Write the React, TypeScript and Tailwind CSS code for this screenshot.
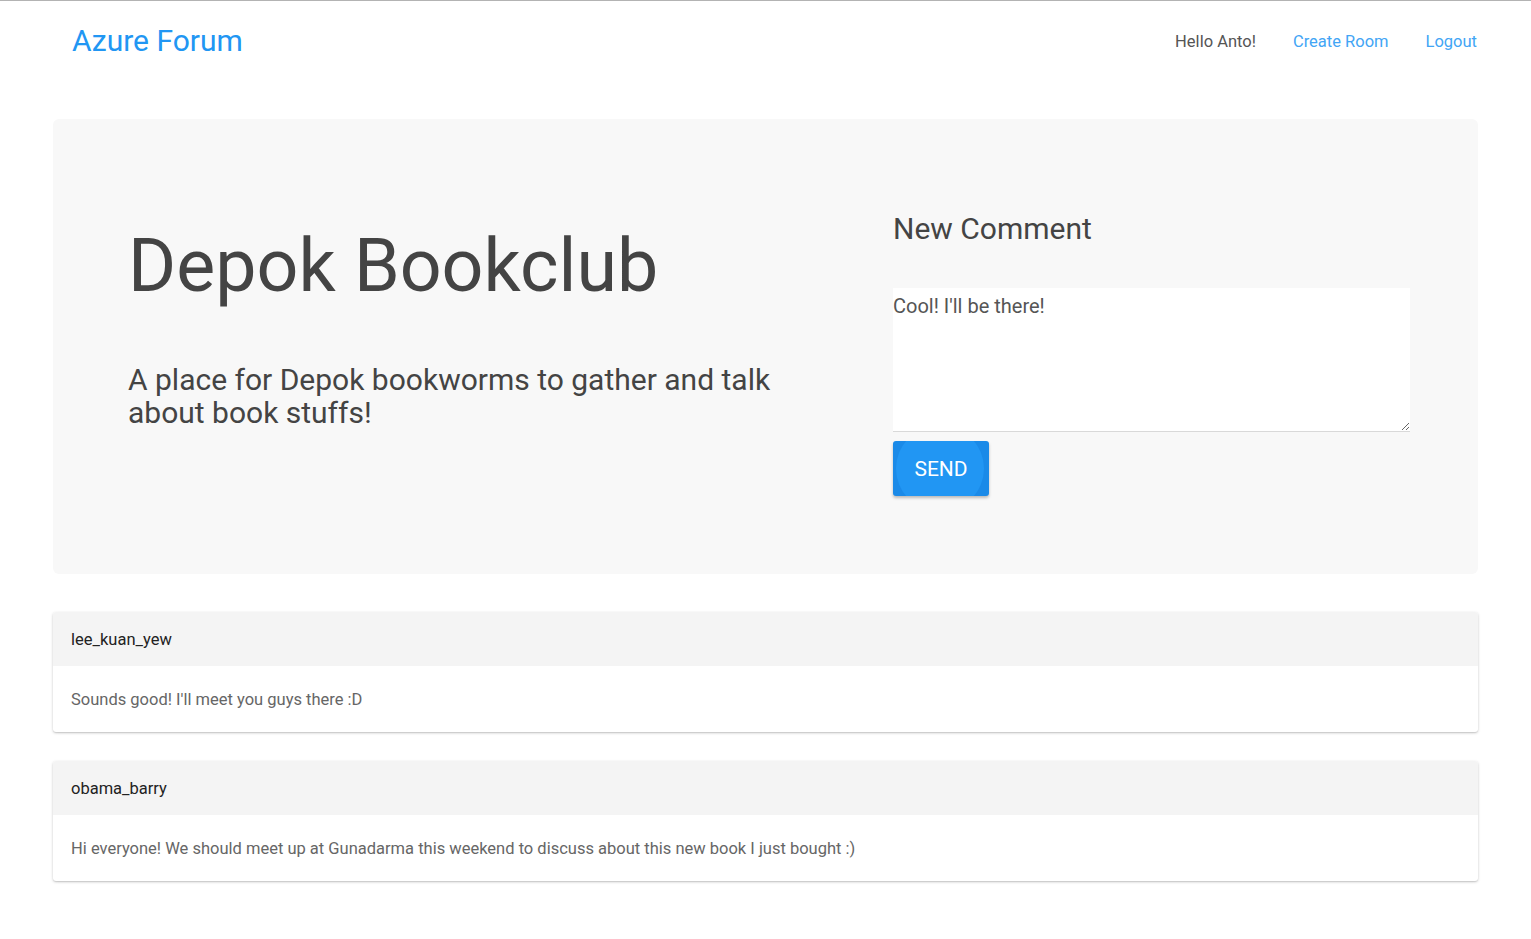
import React from "react";

const comments = [
  { user: "lee_kuan_yew", text: "Sounds good! I'll meet you guys there :D" },
  {
    user: "obama_barry",
    text: "Hi everyone! We should meet up at Gunadarma this weekend to discuss about this new book I just bought :)",
  },
];

export default function App() {
  return (
    <div className="min-h-[939px] bg-white font-['Roboto',sans-serif] border-t border-[#b3b3b3]">
      <nav className="flex h-[80px] items-center justify-between pl-[72px] pr-[54px]">
        <a className="text-[30px] leading-none text-[#2196f3]">Azure Forum</a>
        <ul className="mt-[2px] flex items-center gap-[37px] text-[16.5px]">
          <li className="text-[#555]">Hello Anto!</li>
          <li className="text-[#42a5f5]">Create Room</li>
          <li className="text-[#42a5f5]">Logout</li>
        </ul>
      </nav>

      <div className="mx-[53px] mt-[38px] rounded-[6px] bg-[#f8f8f8] pl-[75px] pr-[68px] pt-[92px] pb-[78px]">
        <div className="flex gap-[85px]">
          <div className="w-[680px] mt-[12px]">
            <h1 className="text-[73.5px] leading-[86px] text-[#444]">Depok Bookclub</h1>
            <p className="mt-[54px] text-[30px] leading-[33px] text-[#444]">
              A place for Depok bookworms to gather and talk about book stuffs!
            </p>
          </div>
          <div className="w-[517px]">
            <h4 className="text-[30px] leading-[36px] text-[#444]">New Comment</h4>
            <textarea
              className="mt-[41px] block h-[144px] w-full resize-y border-b border-[#d9d9d9] bg-white p-0 pt-[1px] text-[20px] leading-[34px] text-[#555] outline-none"
              defaultValue="Cool! I'll be there!"
            />
            <button className="relative mt-[9px] h-[55px] w-[96px] overflow-hidden rounded-[3px] bg-[#1a8ae8] pt-[2px] text-[21px] text-white shadow-[0_2px_3px_rgba(0,0,0,0.25)]">
              <span className="absolute left-[3px] top-[-15px] h-[85px] w-[88px] rounded-full bg-[#2196f3]" />
              <span className="relative">SEND</span>
            </button>
          </div>
        </div>
      </div>

      <div className="mx-[53px] mt-[38px] flex flex-col gap-[29px] pb-[57px]">
        {comments.map((c) => (
          <div
            key={c.user}
            className="overflow-hidden rounded-[3px] bg-white shadow-[0_1px_3px_rgba(0,0,0,0.2),0_1px_1px_rgba(0,0,0,0.08)]"
          >
            <div className="flex h-[54px] items-center bg-[#f4f4f4] px-[18px] pt-[3px] text-[16.5px] text-[#222]">
              {c.user}
            </div>
            <div className="flex h-[66px] items-center px-[18px] pt-[3px] text-[16.5px] text-[#666]">{c.text}</div>
          </div>
        ))}
      </div>
    </div>
  );
}
